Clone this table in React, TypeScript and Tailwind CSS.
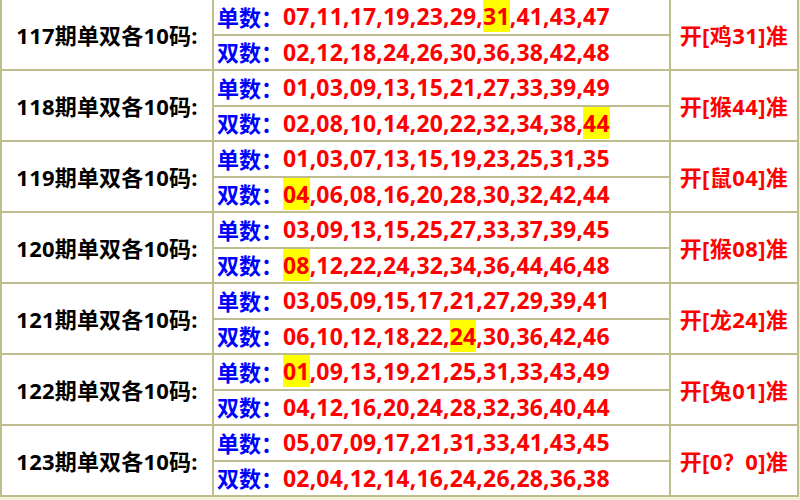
const rows = [
  { qi: '117', dan: '07,11,17,19,23,29,31,41,43,47', shuang: '02,12,18,24,26,30,36,38,42,48', hit: '31', res: '开[鸡31]准' },
  { qi: '118', dan: '01,03,09,13,15,21,27,33,39,49', shuang: '02,08,10,14,20,22,32,34,38,44', hit: '44', res: '开[猴44]准' },
  { qi: '119', dan: '01,03,07,13,15,19,23,25,31,35', shuang: '04,06,08,16,20,28,30,32,42,44', hit: '04', res: '开[鼠04]准' },
  { qi: '120', dan: '03,09,13,15,25,27,33,37,39,45', shuang: '08,12,22,24,32,34,36,44,46,48', hit: '08', res: '开[猴08]准' },
  { qi: '121', dan: '03,05,09,15,17,21,27,29,39,41', shuang: '06,10,12,18,22,24,30,36,42,46', hit: '24', res: '开[龙24]准' },
  { qi: '122', dan: '01,09,13,19,21,25,31,33,43,49', shuang: '04,12,16,20,24,28,32,36,40,44', hit: '01', res: '开[兔01]准' },
  { qi: '123', dan: '05,07,09,17,21,31,33,41,43,45', shuang: '02,04,12,14,16,24,26,28,36,38', hit: '', res: '开[0？0]准' },
];

const Nums = ({ list, hit }: { list: string; hit: string }) => {
  const items = list.split(',');
  return (
    <span className="text-[23px] tracking-[0.15px] text-[#ff0000]">
      {items.map((n, i) => (
        <span key={i}>
          {n === hit ? <span className="bg-[#ffff00]">{n}</span> : n}
          {i < items.length - 1 ? ',' : ''}
        </span>
      ))}
    </span>
  );
};

const App = () => (
  <div
    className="min-h-[500px] w-[800px] bg-[#f3f1d8] font-bold text-[22px] leading-none"
    style={{ fontFamily: '"Noto Sans", "Noto Sans CJK SC", sans-serif' }}
  >
    <div className="flex w-[799px] flex-col gap-[2px] bg-[#bdbd8f] px-[2px] pb-[2px]">
      {rows.map(r => (
        <div className="flex h-[69px] gap-[2px]" key={r.qi}>
          <div className="flex w-[210px] items-center justify-center bg-white tracking-[0.2px] text-black">
            {r.qi}期单双各10码:
          </div>
          <div className="flex w-[455px] flex-col gap-[2px]">
            <div className="flex flex-1 items-center bg-white pl-[3px]">
              <span className="text-[#0000ff]">单数：</span>
              <Nums list={r.dan} hit={r.hit} />
            </div>
            <div className="flex flex-1 items-center bg-white pl-[3px]">
              <span className="text-[#0000ff]">双数：</span>
              <Nums list={r.shuang} hit={r.hit} />
            </div>
          </div>
          <div className="flex flex-1 items-center justify-center bg-white tracking-[0.4px] text-[#ff0000]">
            {r.res}
          </div>
        </div>
      ))}
    </div>
  </div>
);

export default App;
